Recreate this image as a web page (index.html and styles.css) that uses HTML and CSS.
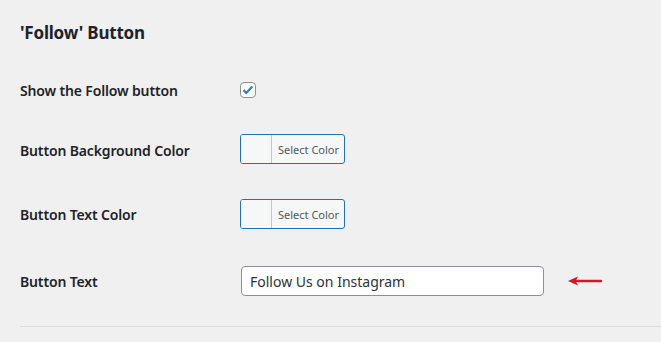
FILE: index.html
```html
<!DOCTYPE html>
<html lang="en">
<head>
    <meta charset="UTF-8">
    <title>Follow Button Settings</title>
    <link rel="stylesheet" href="styles.css">
</head>
<body>
    <div class="wrap">
        <h2 class="section-title">'Follow' Button</h2>

        <div class="form-table">
            <div class="row row-1">
                <label class="label" for="show_follow">Show the Follow button</label>
                <div class="field">
                    <span class="checkbox" id="show_follow">
                        <svg viewBox="0 0 16 16" width="14" height="14"><path d="M2.8 8.2l3.2 3.2 7-7.4" fill="none" stroke="#2f7fc1" stroke-width="2.6" stroke-linejoin="miter"/></svg>
                    </span>
                </div>
            </div>

            <div class="row row-2">
                <div class="label">Button Background Color</div>
                <div class="field">
                    <button class="color-btn"><span class="swatch"></span><span class="color-text">Select Color</span></button>
                </div>
            </div>

            <div class="row row-3">
                <div class="label">Button Text Color</div>
                <div class="field">
                    <button class="color-btn"><span class="swatch"></span><span class="color-text">Select Color</span></button>
                </div>
            </div>

            <div class="row row-4">
                <label class="label" for="btn_text">Button Text</label>
                <div class="field">
                    <input type="text" id="btn_text" class="text-input" value="Follow Us on Instagram">
                    <svg class="arrow" width="36" height="12" viewBox="0 0 36 12">
                        <path d="M34 6H8" stroke="#d9132b" stroke-width="2.4" stroke-linecap="round"/>
                        <path d="M1 6L11 1.5L8.5 6L11 10.5Z" fill="#d9132b"/>
                    </svg>
                </div>
            </div>
        </div>

        <hr class="divider">
    </div>
</body>
</html>
```

FILE: styles.css
```css
body { margin: 0; background-color: #f0f0f1; color: #1d2327; font-family: "Noto Sans", "Open Sans", sans-serif; }
.wrap { padding-left: 20px; }
.section-title { margin: 0; height: 60px; box-sizing: border-box; padding-top: 22px; font-size: 17px; line-height: 22px; font-weight: 700; letter-spacing: -0.2px; color: #1d2327; }
.row { display: flex; align-items: center; }
.row-1 { height: 60px; }
.row-2 { height: 60px; }
.row-3 { height: 68px; }
.row-4 { height: 66px; }
.label { width: 220px; flex: none; font-size: 14px; font-weight: 600; letter-spacing: -0.15px; color: #1d2327; }
.field { display: flex; align-items: center; }
.checkbox { width: 16px; height: 16px; box-sizing: border-box; border: 1px solid #8c8f94; border-radius: 4px; background: #fff; display: flex; align-items: center; justify-content: center; }
.checkbox svg { flex: none; }
.color-btn { display: flex; align-items: stretch; height: 30px; padding: 0; border: 1px solid #2271b1; border-radius: 3px; background: #f6f7f7; overflow: hidden; font-family: inherit; cursor: pointer; }
.swatch { width: 30px; flex: none; border-right: 1px solid #c3c4c7; background: #f6f7f7; }
.color-text { display: flex; align-items: center; padding: 0 5px 0 6px; font-size: 11px; white-space: nowrap; color: #50575e; }
.row-2 .field { margin-top: -2px; }
.text-input { width: 303px; height: 30px; box-sizing: border-box; margin-left: 1px; padding: 0 8px; border: 1px solid #8c8f94; border-radius: 4px; background: #fff; font-family: inherit; font-size: 14px; color: #2c3338; }
.arrow { margin-left: 23px; }
.divider { margin: 12px 0 0; border: 0; border-top: 1px solid #dcdcde; }
```
